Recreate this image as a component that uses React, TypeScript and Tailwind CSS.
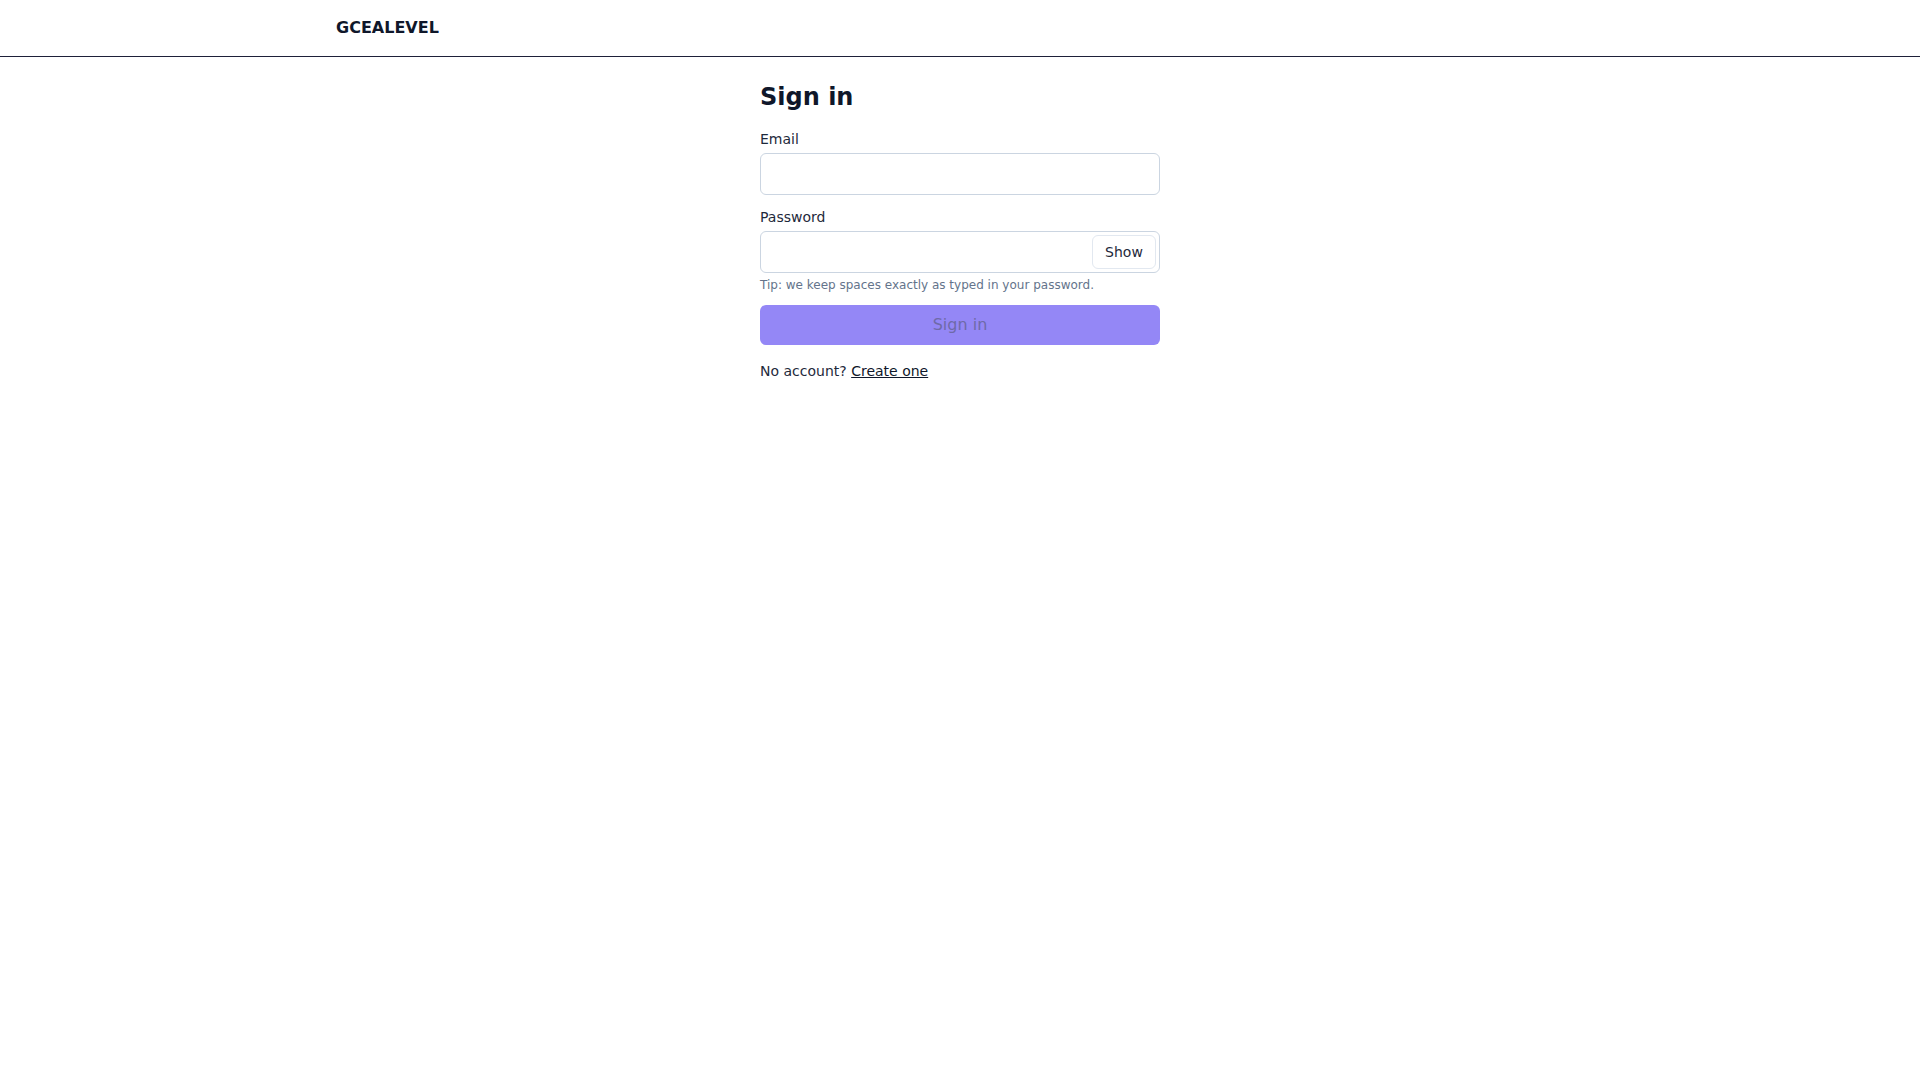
import { useState } from 'react';

const font = { fontFamily: '"DejaVu Sans", "Noto Sans", sans-serif' };

export default function App() {
  const [email, setEmail] = useState('');
  const [password, setPassword] = useState('');
  const [showPassword, setShowPassword] = useState(false);

  const canSubmit = email.length > 0 && password.length > 0;

  return (
    <div className="min-h-screen bg-white text-[#0f172a]" style={font}>
      <header className="h-[57px] border-b border-[#1e2039] bg-white">
        <div className="mx-auto flex h-full max-w-7xl items-center px-4">
          <span className="text-base font-bold text-[#0f172a]">GCEALEVEL</span>
        </div>
      </header>

      <main className="mx-auto max-w-[400px] pt-6">
        <h1 className="mb-4 text-2xl font-bold leading-8 text-[#0f172a]">Sign in</h1>

        <form onSubmit={(e) => e.preventDefault()}>
          <label className="block text-sm leading-5 text-[#1e293b]">Email</label>
          <input
            type="email"
            value={email}
            onChange={(e) => setEmail(e.target.value)}
            className="mt-1 block h-[42px] w-full rounded-md border border-[#cbd5e1] bg-white px-3 text-sm outline-none"
          />

          <label className="mt-3 block text-sm leading-5 text-[#1e293b]">Password</label>
          <div className="mt-1 flex h-[42px] w-full items-center rounded-md border border-[#cbd5e1] bg-white pl-3 pr-[3px]">
            <input
              type={showPassword ? 'text' : 'password'}
              value={password}
              onChange={(e) => setPassword(e.target.value)}
              className="h-full min-w-0 flex-1 bg-transparent text-sm outline-none"
            />
            <button
              type="button"
              onClick={() => setShowPassword(!showPassword)}
              className="h-[34px] w-16 rounded-md border border-[#e2e8f0] bg-white text-sm text-[#1e293b]"
            >
              {showPassword ? 'Hide' : 'Show'}
            </button>
          </div>
          <p className="mt-1 text-xs leading-4 text-[#64748b]">
            Tip: we keep spaces exactly as typed in your password.
          </p>

          <button
            type="submit"
            disabled={!canSubmit}
            className="mt-3 h-10 w-full rounded-md bg-[#9487f6] text-base text-[#6f6aa8]"
          >
            Sign in
          </button>
        </form>

        <p className="mt-4 text-sm leading-5 text-[#1e293b]">
          No account?{' '}
          <a href="#" className="text-[#0f172a] underline">
            Create one
          </a>
        </p>
      </main>
    </div>
  );
}
